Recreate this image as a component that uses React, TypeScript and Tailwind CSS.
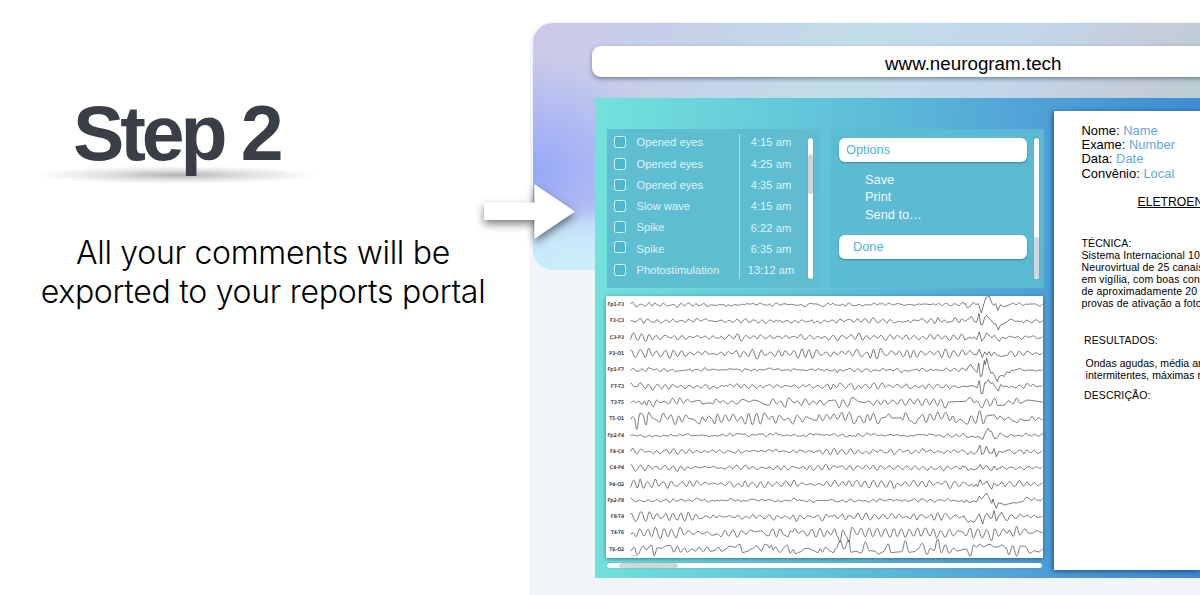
import React from "react";

const comments = [
  { label: "Opened eyes", time: "4:15 am" },
  { label: "Opened eyes", time: "4:25 am" },
  { label: "Opened eyes", time: "4:35 am" },
  { label: "Slow wave", time: "4:15 am" },
  { label: "Spike", time: "6:22 am" },
  { label: "Spike", time: "6:35 am" },
  { label: "Photostimulation", time: "13:12 am" },
];

const patient = [
  ["Nome:", "Name"],
  ["Exame:", "Number"],
  ["Data:", "Date"],
  ["Convênio:", "Local"],
];

/* amps: amplitude sampled evenly over the trace; event: [x, dy] pairs of the spike, in thirds of a pixel;
   peaks: "x,y" extremes of a whole trace in thirds of a pixel, used instead of amps and event */
type Channel = { name: string; amps?: number[]; rough?: number; event?: number[][]; peaks?: string };

const channels: Channel[] = [
  { name: "Fp1-F3", rough: 1.2, amps: [1.6, 1.1, 0.9, 0.5, 0.7, 0.7, 0.6, 0.6, 0.9, 0.8, 0.6, 0.6, 1, 1, 0.9, 0.6],
    event: [[436, -3], [442, 10], [450, 5], [460, -7], [468, 0], [475, -3], [484, 25], [492, -3], [497, -20], [508, -25], [515, -5], [520, 2], [527, -3], [533, 17], [542, 0], [550, 7], [560, 4]] },
  { name: "F3-C3", rough: 1.2, amps: [2.6, 1.8, 1.5, 0.8, 2.2, 1.2, 1.2, 1.2, 1.3, 2.2, 1.6, 1.6, 2.5, 1.3, 1.3, 0.8],
    event: [[440, -2], [455, -13], [464, 3], [470, 4], [477, -22], [482, 11], [488, 11], [494, -11], [500, -16], [510, -5], [522, 9], [528, 10], [535, 27], [541, 13], [550, 9], [562, 2]] },
  { name: "C3-P3", rough: 0.7, amps: [3.5, 2.8, 2.6, 1, 2.8, 2.4, 2, 2.2, 2.4, 2.8, 2, 2.5, 3, 1.3, 1.3, 0.8],
    event: [[440, 5], [448, 0], [456, 4], [462, -2], [470, 7], [478, -16], [485, 12], [492, 3], [500, -13], [508, -5], [516, 2], [523, -6], [530, 4], [538, 12], [546, 0], [558, 4]] },
  { name: "P3-O1", rough: 0.5, amps: [3.7, 3.3, 3, 1, 3.3, 2.8, 3.5, 3, 3.2, 3.7, 3, 3.3, 3.5, 1.8, 2, 1],
    event: [[438, 4], [450, -10], [460, 2], [470, 4], [478, -13], [487, 12], [494, -5], [501, 4], [507, -6], [514, 8], [523, -4], [532, 4], [542, 9], [556, 6]] },
  { name: "Fp1-F7", rough: 1.3, amps: [1.2, 1, 1, 0.8, 0.8, 0.8, 0.8, 0.9, 1.2, 1, 0.7, 0.8, 1.2, 0.8, 0.8, 0.7],
    event: [[440, 1], [446, -12], [453, -16], [460, -3], [471, 8], [476, -20], [481, 20], [486, 18], [493, -28], [496, -15], [500, -35], [507, -5], [513, 10], [518, 7], [525, 20], [532, 36], [537, 20], [546, 16], [553, 20], [560, 6], [570, 8]] },
  { name: "F7-T3", rough: 1.2, amps: [3, 2.1, 1.8, 1, 2.4, 1.3, 1.4, 1.6, 2.4, 2.6, 1.6, 2, 2.5, 1, 1.2, 0.8],
    event: [[438, 2], [452, -1], [463, 0], [471, 5], [478, -17], [483, 22], [488, 22], [494, -10], [499, -10], [505, -20], [512, -8], [518, -10], [527, 4], [535, 15], [542, -5], [550, 2], [560, -1]] },
  { name: "T3-T5",
    peaks: "92,338 100,333 110,338 116,333 126,344 133,333 140,346 146,330 160,350 170,330 180,338 192,334 206,342 218,325 230,342 240,323 250,340 262,328 274,336 290,332 300,331 306,342 330,338 338,342 348,327 360,338 370,332 382,342 396,333 410,342 427,328 448,335 462,330 506,346 519,326 530,342 542,333 555,352 566,323 582,338 592,333 604,346 616,326 628,344 640,333 650,342 660,330 672,345 686,332 704,330 718,353 728,329 743,350 756,322 780,336 794,338 806,333 820,346 832,330 842,344 854,330 864,343 878,330 892,342 904,328 917,346 930,326 942,342 953,327 966,347 978,326 989,344 1001,327 1013,347 1022,328 1036,355 1046,336 1096,334 1111,322 1122,338 1132,333 1145,354 1160,328 1170,348 1184,324 1194,347 1212,345 1226,332 1240,342 1250,324 1260,340 1284,330 1306,333 1328,336" },
  { name: "T5-O1",
    peaks: "92,388 97,380 103,385 110,418 120,370 128,373 138,405 146,367 158,385 170,390 178,397 190,369 198,383 203,388 212,374 226,404 236,378 246,396 258,375 266,385 280,388 298,402 307,380 316,394 326,378 334,385 344,402 352,372 364,398 376,375 388,393 399,372 412,393 424,380 436,402 446,370 457,404 470,370 481,402 493,369 508,388 516,378 527,400 538,376 552,390 566,385 578,402 592,375 600,384 607,397 618,380 630,385 641,390 650,391 657,374 668,392 680,373 690,388 702,372 712,388 726,367 735,392 748,367 762,402 778,378 792,399 803,373 810,392 820,370 834,402 845,384 856,382 866,372 876,384 890,384 902,383 908,390 916,368 930,392 946,402 956,385 968,373 978,398 990,372 1002,391 1013,366 1024,388 1037,367 1050,392 1058,378 1068,398 1080,388 1102,403 1114,377 1127,400 1139,362 1150,402 1160,378 1182,374 1192,388 1200,378 1212,390 1226,382 1238,392 1252,398 1262,387 1275,392 1288,390 1296,379 1306,392 1316,383 1328,390" },
  { name: "Fp2-F4", rough: 1.2, amps: [1.1, 0.9, 0.8, 0.5, 0.7, 0.8, 0.6, 0.5, 1, 0.8, 0.5, 0.6, 0.9, 1, 0.8, 0.6],
    event: [[438, 5], [446, 7], [456, 3], [466, 7], [474, 4], [488, 13], [495, -5], [504, -20], [509, -12], [515, -10], [523, 10], [529, 11], [541, -7], [550, 2], [562, 6]] },
  { name: "F4-C4", rough: 1.1, amps: [2.2, 2, 2, 0.7, 1.6, 1.2, 1.5, 2, 1.6, 2.1, 1.2, 1.8, 1.5, 1, 1.2, 0.8],
    event: [[436, 2], [444, 10], [452, 0], [462, 9], [470, 2], [480, -19], [485, 9], [491, 6], [499, -16], [507, 4], [517, 6], [522, -9], [529, 16], [537, 0], [548, 3], [560, -3]] },
  { name: "C4-P4", rough: 0.6, amps: [2.7, 2, 2, 0.7, 2, 1.7, 1.8, 2, 2, 2, 1.6, 2, 1.8, 1, 1.4, 0.7],
    event: [[436, -4], [445, 9], [452, 2], [462, 7], [474, 1], [481, -10], [488, 5], [500, -7], [508, 5], [515, 9], [522, -5], [530, 7], [540, 0], [548, -4], [560, 5]] },
  { name: "P4-O2", rough: 0.5, amps: [4.2, 3.4, 2.6, 0.8, 2.7, 2.5, 2.7, 2.7, 3, 3.2, 2.4, 3.2, 3, 1.4, 2.6, 1],
    event: [[436, -3], [446, 5], [455, 1], [463, 8], [468, 0], [473, 8], [480, -13], [488, 2], [494, -2], [500, -9], [510, 9], [515, 16], [522, -4], [530, 6], [538, 2], [546, -6], [556, 8]] },
  { name: "Fp2-F8", rough: 1.2, amps: [1.1, 1, 0.9, 0.6, 1, 1, 0.8, 0.6, 1, 1.2, 0.9, 0.7, 1, 0.9, 1, 0.8],
    event: [[438, -1], [450, 7], [460, 2], [471, 4], [477, -12], [486, -5], [499, -22], [505, -12], [515, 9], [519, -4], [523, 10], [529, 24], [535, 7], [545, 10], [556, 14], [563, 11], [570, 10], [578, 7], [590, 8], [600, 4], [607, 5], [620, -10], [630, -3]] },
  { name: "F8-T4", rough: 1.2, amps: [3.4, 3.3, 3.2, 1, 1.8, 2.1, 2.4, 2.6, 2.4, 3, 1.8, 3, 2.5, 1.6, 2, 1],
    event: [[436, 6], [444, 18], [452, 12], [462, 17], [470, 5], [478, -8], [488, 22], [495, -3], [502, -9], [511, 6], [516, 4], [522, -18], [529, 13], [537, -3], [545, -14], [556, 9]] },
  { name: "T4-T6",
    peaks: "92,732 100,728 107,740 120,717 132,738 144,718 155,740 166,712 181,746 192,716 204,740 214,718 228,744 240,712 252,735 266,722 280,734 294,724 308,732 322,725 336,736 352,732 363,740 375,721 386,738 399,720 412,742 424,722 438,733 452,720 466,726 482,722 504,738 519,717 529,741 540,717 552,735 564,740 572,722 578,726 584,716 596,730 609,722 622,738 636,718 648,742 660,715 672,740 682,722 692,735 704,716 712,738 720,756 728,720 740,740 746,756 756,712 772,734 783,715 796,740 808,714 818,740 832,715 844,740 856,716 870,742 882,716 892,740 904,717 916,742 928,718 941,739 953,714 963,739 976,714 990,738 1000,716 1010,744 1022,722 1036,742 1048,718 1060,738 1074,722 1088,726 1098,738 1111,714 1120,744 1134,717 1147,744 1160,720 1175,752 1184,716 1196,739 1210,717 1222,730 1228,720 1240,739 1250,709 1259,735 1275,716 1286,730 1298,729 1310,722 1328,728" },
  { name: "T6-O2",
    peaks: "92,783 102,772 112,794 130,768 138,780 154,765 163,798 172,773 184,775 198,768 211,766 222,787 232,768 242,787 254,774 262,787 276,777 286,783 297,772 310,785 322,770 330,784 342,782 356,771 364,784 375,779 388,768 405,772 420,763 428,788 442,784 457,776 470,767 484,783 494,763 504,766 508,774 514,766 519,780 527,770 538,787 562,765 571,790 580,778 586,791 600,786 616,775 628,776 642,782 654,788 661,776 667,787 676,772 690,783 700,788 708,775 721,752 732,778 746,750 753,787 766,784 784,789 796,756 808,782 822,783 836,792 850,785 865,762 873,788 892,786 905,785 916,752 927,787 942,785 953,778 967,760 981,794 991,775 1002,782 1013,747 1024,788 1036,764 1048,790 1060,775 1072,783 1086,780 1098,776 1111,799 1121,765 1130,772 1138,763 1150,770 1168,763 1186,772 1196,770 1206,765 1218,774 1227,794 1238,767 1250,798 1262,768 1275,769 1290,790 1304,782 1316,786 1328,778" },
];

const hash = (n: number) => {
  const s = Math.sin(n * 127.1 + 11.7) * 43758.5453;
  return (s - Math.floor(s)) * 2 - 1;
};
const noise = (x: number) => {
  const i = Math.floor(x);
  const f = x - i;
  const u = f * f * (3 - 2 * f);
  return hash(i) * (1 - u) + hash(i + 1) * u;
};

function smooth(peaks: string) {
  const p = peaks.split(" ").map((s) => s.split(",").map((n) => Number(n) / 3 - 6));
  let d = `M${p[0][0].toFixed(1)},${p[0][1].toFixed(1)}`;
  for (let i = 1; i < p.length; i++) {
    const [x0, y0] = p[i - 1];
    const [x1, y1] = p[i];
    const h = (x1 - x0) * 0.36;
    d += `C${(x0 + h).toFixed(1)},${y0.toFixed(1)} ${(x1 - h).toFixed(1)},${y1.toFixed(1)} ${x1.toFixed(1)},${y1.toFixed(1)}`;
  }
  return d;
}

function trace(c: Channel, row: number) {
  if (c.peaks) return smooth(c.peaks);
  const amps = c.amps ?? [1, 1];
  const rough = c.rough ?? 1;
  const base = 8.6 + row * 16.31;
  const ex = (c.event ?? []).map(([x, y]) => [x / 3 + 214, y / 3]);
  const start = ex[0][0];
  const end = ex[ex.length - 1][0];
  const points: string[] = [];
  const sample = (x: number) => {
    const t = Math.max(0, ((x - 25) / 412) * (amps.length - 1));
    const i = Math.min(Math.floor(t), amps.length - 2);
    const amp = amps[i] + (amps[i + 1] - amps[i]) * (t - i);
    const phase = noise(x / 13 + row * 31) * 1.2;
    const vary = 0.9 + 0.6 * noise(x / 7 + row * 57);
    const wave = Math.cos(((x - 26.5) / 8.05) * Math.PI * 2 + phase);
    return -amp * vary * wave + rough * 0.8 * noise(x / 2.1 + row * 91) + noise(x / 9 + row * 71) * 0.9;
  };
  for (let x = 24.5; x < start - 1; x += 0.8) points.push(`${x.toFixed(1)},${(base + sample(x)).toFixed(1)}`);
  ex.forEach(([x, y]) => points.push(`${x.toFixed(1)},${(base + y).toFixed(1)}`));
  for (let x = end + 2; x <= 437; x += 0.8) points.push(`${x.toFixed(1)},${(base + sample(x)).toFixed(1)}`);
  return "M" + points.join("L");
}

function Arrow() {
  return (
    <svg className="absolute left-[470px] top-[170px] z-10 drop-shadow-[0_4px_4px_rgba(0,0,0,0.5)]" width="120" height="90" viewBox="0 0 120 90">
      <path d="M14 32.5H64.3V14L105 41.5L64.3 69V50H14Z" fill="#fff" />
    </svg>
  );
}

function Intro() {
  return (
    <section className="flex w-[530px] shrink-0 flex-col">
      <div className="relative mt-[89px] h-[101px] pl-[73px]">
        <div className="absolute left-[35px] top-[77px] h-[18px] w-[285px] bg-[radial-gradient(closest-side,rgba(0,0,0,0.3),rgba(0,0,0,0.12)_50%,rgba(0,0,0,0)_100%)]" />
        <h1 className="relative text-[77px] font-bold leading-[88px] tracking-[-4.1px] text-[#3a3e46]">Step 2</h1>
      </div>
      <p className="mt-[43px] w-[526px] whitespace-nowrap text-center font-['Inter'] text-[32px] font-light leading-[39px] tracking-[-0.28px] text-black">
        All your comments will be
        <br />
        exported to your reports portal
      </p>
    </section>
  );
}

function CommentList() {
  return (
    <div className="flex h-[159px] w-[213px] bg-[#5fbcd1]/95 pt-[5px] text-[11.2px] text-[#def4f8]">
      <div className="flex h-[145px] w-[133px] flex-col border-r border-white/50 pl-[7px]">
        {comments.map((c, i) => (
          <div key={i} className="-mt-[1.9px] mb-[1.9px] flex h-[21.3px] shrink-0 items-center">
            <span className={`h-[12px] w-[12px] shrink-0 rounded-[2.5px] border-[1.5px] border-[#d5f3f7] bg-[#4cb8cf] ${i === 5 ? "-mt-[5px]" : "-mt-[1px]"}`} />
            <span className="ml-[10.5px] whitespace-nowrap leading-[17px]">{c.label}</span>
          </div>
        ))}
      </div>
      <div className="flex w-[62px] flex-col text-center">
        {comments.map((c, i) => (
          <span key={i} className="-mt-[1.9px] mb-[1.9px] flex h-[21.3px] shrink-0 items-center justify-center whitespace-nowrap">
            {c.time}
          </span>
        ))}
      </div>
      <div className="ml-[6px] mt-[4px] h-[141px] w-[5px] rounded-full bg-white pt-[16px] shadow-[0_0_1px_rgba(0,0,0,0.4)]">
        <div className="h-[40px] rounded-full bg-[#cfd3d5]" />
      </div>
    </div>
  );
}

function OptionsPanel() {
  return (
    <div className="ml-[11px] flex h-[159px] w-[213px] bg-[#5dbbd2]/95 pl-[8px] pt-[8.5px] text-[12.8px]">
      <div className="flex w-[188px] flex-col">
        <div className="h-[24px] rounded-[6px] bg-white pl-[7px] leading-[24px] text-[#4fb3d8] shadow-[0_1px_2px_rgba(0,60,90,0.4)]">Options</div>
        <ul className="mt-[9.5px] pl-[26px] leading-[17.4px] text-white/95">
          <li>Save</li>
          <li>Print</li>
          <li>Send to…</li>
        </ul>
        <div className="mt-[12px] h-[24px] rounded-[6px] bg-white pl-[14px] leading-[24px] text-[#4fb3d8] shadow-[0_1px_2px_rgba(0,60,90,0.4)]">Done</div>
      </div>
      <div className="ml-[7px] h-[141px] w-[5px] rounded-full bg-white pt-[99px] shadow-[0_0_1px_rgba(0,0,0,0.4)]">
        <div className="h-[41px] rounded-full bg-[#d3d5dd]" />
      </div>
    </div>
  );
}

function Eeg() {
  return (
    <div className="mt-[8px] h-[262px] w-[437px] bg-white shadow-[0_1px_4px_rgba(0,40,70,0.5)]">
      <svg width="437" height="262" viewBox="0 0 437 262" className="block">
        {channels.map((c, i) => (
          <g key={c.name}>
            <text x="18.2" y={10.1 + i * 16.31} textAnchor="end" stroke="#222" strokeWidth="0.15" className="fill-[#222] font-['DejaVu_Sans'] text-[4.9px]">
              {c.name}
            </text>
            <path d={trace(c, i)} fill="none" stroke="#333" strokeWidth="0.65" strokeLinejoin="round" />
          </g>
        ))}
        <path d="M26 262v-2.5h4.5v2.5" fill="none" stroke="#9fb4cc" strokeWidth="0.6" />
      </svg>
    </div>
  );
}

function Report() {
  return (
    <div className="ml-[10px] mt-[12.5px] h-[459px] w-[146px] overflow-hidden whitespace-nowrap bg-white pl-[27.5px] pt-[13px] text-black shadow-[-1px_1px_5px_rgba(0,45,90,0.7)]">
      <div className="text-[12.95px] leading-[14.4px]">
        {patient.map(([k, v]) => (
          <div key={k}>
            {k} <span className="text-[#62a8dc]">{v}</span>
          </div>
        ))}
      </div>
      <div className="ml-[56px] mt-[14px] text-[12.2px] leading-[15px] underline">ELETROEN</div>
      <div className="mt-[26.5px] text-[10.5px] leading-[12.05px] tracking-[0.12px]">
        <div>TÉCNICA:</div>
        <div>Sistema Internacional 10</div>
        <div>Neurovirtual de 25 canais</div>
        <div>em vigília, com boas con</div>
        <div>de aproximadamente 20</div>
        <div>provas de ativação a foto</div>
        <div className="ml-[2.5px] mt-[25.5px]">RESULTADOS:</div>
        <div className="ml-[4px] mt-[10.5px] tracking-[0.05px]">Ondas agudas, média an</div>
        <div className="ml-[4px] tracking-[0.05px]">intermitentes, máximas n</div>
        <div className="ml-[2.5px] mt-[7.5px]">DESCRIÇÃO:</div>
      </div>
    </div>
  );
}

export default function App() {
  return (
    <main className="relative flex h-[595px] w-[1200px] overflow-hidden bg-white font-['Liberation_Sans',Arial,sans-serif]">
      <Intro />
      <Arrow />
      <section className="relative mt-[22px] flex h-[573px] w-[670px] flex-col overflow-hidden rounded-tl-[22px] bg-[#f1f5f8]">
        <div className="absolute left-[3px] top-[1px] h-[247px] w-[667px] rounded-l-[20px] bg-[radial-gradient(ellipse_110px_65px_at_60px_247px,#cdeefa_0%,rgba(200,234,250,0.9)_50%,rgba(196,220,250,0)_100%),radial-gradient(ellipse_160px_60px_at_0px_247px,#cbeaf9_0%,rgba(198,228,250,0.8)_60%,rgba(196,220,250,0)_100%),radial-gradient(ellipse_140px_115px_at_0px_148px,#96a9f8_0%,rgba(166,178,246,0.8)_45%,rgba(190,194,236,0)_100%),linear-gradient(120deg,#cdc8e9_0%,#c7cfe8_17%,#c2dde8_41%,#c3d7ec_60%,#c4ccd8_79%,#b5d1d0_92%,#b5d1d0_100%)]" />
        <div className="relative ml-[62px] mt-[24px] h-[31px] w-[620px] shrink-0 rounded-[9px] bg-white pl-[293px] text-[18.8px] leading-[35px] text-black shadow-[0_2px_4px_rgba(40,60,90,0.5)]">
          www.neurogram.tech
        </div>
        <div className="relative ml-[65px] mt-[21px] flex h-[480px] w-[605px] shrink-0 bg-[linear-gradient(92deg,#73e2dc_0%,#5fc1d9_40%,#4f9fd6_74%,#4088d3_100%)]">
          <div className="ml-[11px] flex w-[438px] shrink-0 flex-col pt-[31px]">
            <div className="flex pl-[1px]">
              <CommentList />
              <OptionsPanel />
            </div>
            <Eeg />
            <div className="ml-[1px] mt-[5px] h-[5px] w-[435px] rounded-full bg-white pl-[12px] shadow-[0_0_1px_rgba(0,0,0,0.4)]">
              <div className="h-[5px] w-[59px] rounded-full bg-[#d3d5d6]" />
            </div>
          </div>
          <Report />
        </div>
      </section>
    </main>
  );
}
